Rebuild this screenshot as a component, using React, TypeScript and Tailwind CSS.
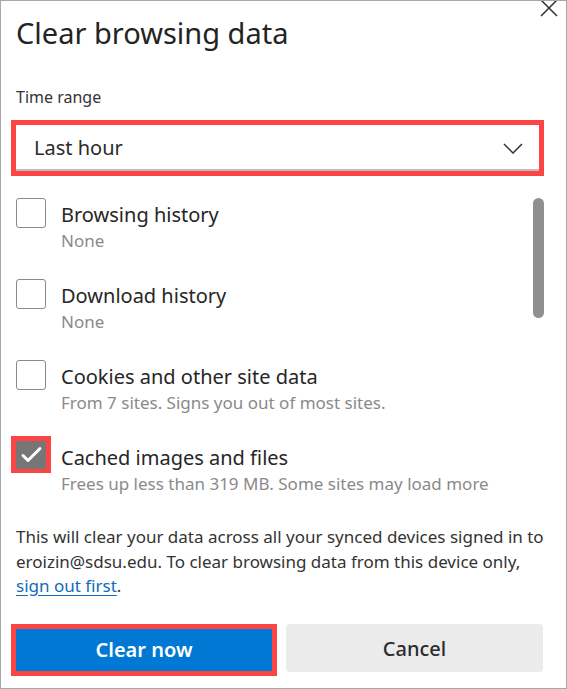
const rows = [
  { title: "Browsing history", detail: "None", checked: false },
  { title: "Download history", detail: "None", checked: false },
  { title: "Cookies and other site data", detail: "From 7 sites. Signs you out of most sites.", checked: false },
  { title: "Cached images and files", detail: "Frees up less than 319 MB. Some sites may load more", checked: true },
];

function Checkbox({ checked }: { checked: boolean }) {
  if (checked) {
    return (
      <div className="-m-[5px] shrink-0 border-[5px] border-b-4 border-[#fb4444]">
        <div className="flex h-[28px] w-[30px] items-center justify-center bg-[#767676]">
          <svg width="30" height="28" viewBox="0 0 30 28" fill="none">
            <path d="M7 14.5 L12 19.5 L24 7.5" stroke="#fff" strokeWidth="3" strokeLinecap="round" strokeLinejoin="round" />
          </svg>
        </div>
      </div>
    );
  }
  return <div className="h-[30px] w-[30px] shrink-0 rounded-[3px] border border-[#8a8a8a] bg-white" />;
}

export default function App() {
  return (
    <div className="relative h-[689px] w-[567px] overflow-hidden border border-[#a6a9ac] bg-white font-['Noto_Sans',sans-serif] text-[#262626]">
      <svg className="absolute right-[8px] top-[-2px]" width="18" height="18" viewBox="0 0 18 18" fill="none">
        <path d="M1 1 L17 17 M17 1 L1 17" stroke="#333" strokeWidth="1.5" />
      </svg>

      <div className="pl-[15px] pr-[22px] pt-[14px]">
        <h1 className="text-[29px] leading-[36px] text-[#242424]">Clear browsing data</h1>

        <p className="mt-[34px] text-[16px] leading-[24px] text-[#333]">Time range</p>

        <div className="-ml-[5px] mt-[11px] h-[56px] w-[533px] border-[5px] border-[#fb4444]">
          <div className="flex h-full items-center justify-between border-b-2 border-[#bdbdbd] pl-[18px] pr-[16px] pt-[2px]">
            <span className="text-[20px] text-[#2b2b2b]">Last hour</span>
            <svg width="20" height="11" viewBox="0 0 20 11" fill="none">
              <path d="M1 1 L10 10 L19 1" stroke="#333" strokeWidth="1.5" />
            </svg>
          </div>
        </div>

        <div className="mt-[22px] flex">
          <div className="flex-1">
            {rows.map((row) => (
              <div key={row.title} className="flex h-[81px] items-start gap-[15px]">
                <Checkbox checked={row.checked} />
                <div className="pt-[2px]">
                  <div className="text-[20px] leading-[30px] text-[#262626]">{row.title}</div>
                  <div className="text-[17px] leading-[21px] text-[#8a8a8a]">{row.detail}</div>
                </div>
              </div>
            ))}
          </div>
          <div className="h-[120px] w-[11px] rounded-full bg-[#8f8f8f]" />
        </div>

        <p className="mt-[3px] text-[17px] leading-[24.5px] text-[#333]">
          This will clear your data across all your synced devices signed in to eroizin@sdsu.edu. To clear
          browsing data from this device only,{" "}
          <a className="text-[#0f6cbd] underline underline-offset-[3px]">sign out first</a>.
        </p>

        <div className="mt-[25px] flex items-start gap-[9px]">
          <div className="-ml-[5px] h-[52px] w-[266px] border-[5px] border-[#fb4444]">
            <button className="flex h-full w-full items-center justify-center bg-[#0078d4] text-[20px] font-semibold text-white">
              Clear now
            </button>
          </div>
          <button className="flex h-[48px] w-[257px] items-center justify-center rounded-[4px] bg-[#ebebeb] pt-[3px] text-[20px] font-medium text-[#2b2b2b]">
            Cancel
          </button>
        </div>
      </div>
    </div>
  );
}
